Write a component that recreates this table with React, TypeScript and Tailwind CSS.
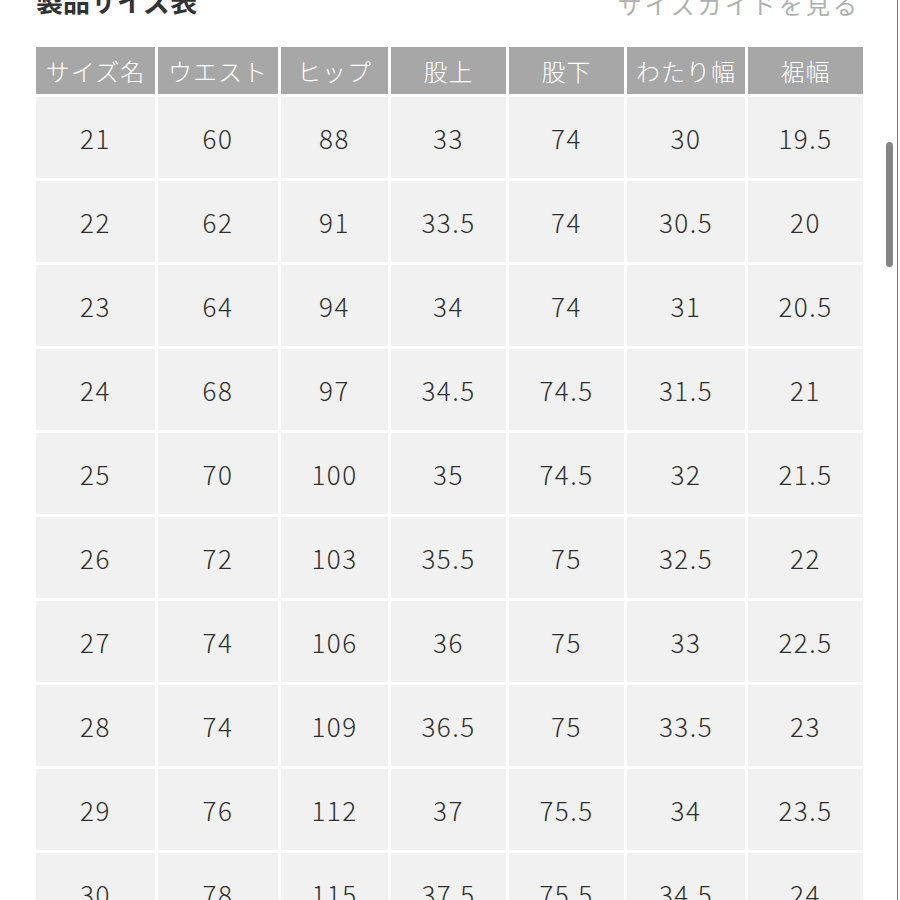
const headers = ["サイズ名", "ウエスト", "ヒップ", "股上", "股下", "わたり幅", "裾幅"];

const rows: string[][] = [
  ["21", "60", "88", "33", "74", "30", "19.5"],
  ["22", "62", "91", "33.5", "74", "30.5", "20"],
  ["23", "64", "94", "34", "74", "31", "20.5"],
  ["24", "68", "97", "34.5", "74.5", "31.5", "21"],
  ["25", "70", "100", "35", "74.5", "32", "21.5"],
  ["26", "72", "103", "35.5", "75", "32.5", "22"],
  ["27", "74", "106", "36", "75", "33", "22.5"],
  ["28", "74", "109", "36.5", "75", "33.5", "23"],
  ["29", "76", "112", "37", "75.5", "34", "23.5"],
  ["30", "78", "115", "37.5", "75.5", "34.5", "24"],
];

export default function App() {
  return (
    <div className="relative h-[900px] w-[900px] overflow-hidden bg-white font-['Noto_Sans_CJK_JP','Noto_Sans',sans-serif]">
      {/* heading row, scrolled partly off the top */}
      <div className="-mt-[17px] flex items-end justify-between pl-[36px] pr-[40px]">
        <h2 className="text-[27px] font-bold leading-[36px] text-[#333]">製品サイズ表</h2>
        <span className="-mb-[3px] text-[24px] leading-[36px] tracking-[3px] text-[#b0b0b0]">サイズガイドを見る</span>
      </div>

      <div className="mt-[28px] ml-[36px] grid w-fit grid-cols-[119px_120px_107px_115px_115px_118px_115px] gap-[3px]">
        {headers.map((h) => (
          <div
            key={h}
            className="flex h-[47px] items-center justify-center bg-[#a7a7a7] text-[24px] font-light tracking-[1px] text-white"
          >
            {h}
          </div>
        ))}
        {rows.map((r) =>
          r.map((v, i) => (
            <div
              key={r[0] + "-" + i}
              className="flex h-[81px] items-center justify-center bg-[#f1f1f1] text-[26px] font-light tracking-[1.5px] text-[#2e2e2e]"
            >
              {v}
            </div>
          ))
        )}
      </div>

      {/* scrollbar and screen edge */}
      <div className="absolute left-[886px] top-[142px] h-[125px] w-[7px] rounded-full bg-[#858585]" />
      <div className="absolute right-[2px] top-0 h-full w-px bg-[#777]" />
    </div>
  );
}
